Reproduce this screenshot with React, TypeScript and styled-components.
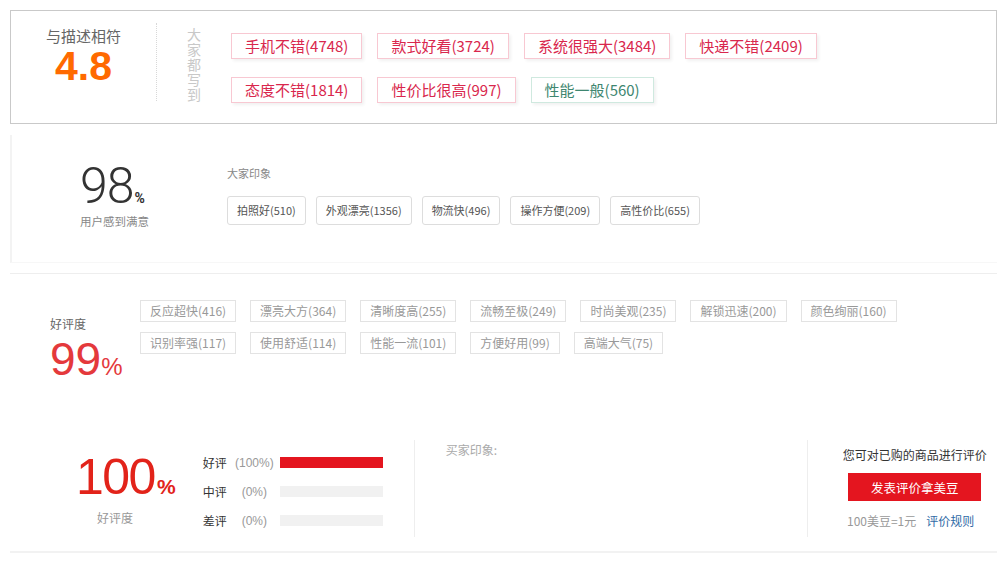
import React from 'react';
import styled, { createGlobalStyle } from 'styled-components';

const GlobalStyle = createGlobalStyle`
  body {
    margin: 0;
    background: #fff;
    font-family: "Noto Sans CJK SC", "Noto Sans", sans-serif;
    color: #333;
  }
`;

const Page = styled.div`
  width: 987px;
  padding: 10px 11px 0 10px;
`;

/* ---------- section 1: 大家都写到 ---------- */
const SummaryBox = styled.div`
  display: flex;
  align-items: flex-start;
  height: 112px;
  border: 1px solid #c9c9c9;
`;

const ScoreCol = styled.div`
  width: 145px;
  padding-top: 16px;
  text-align: center;
`;

const ScoreTitle = styled.div`
  font-size: 15px;
  line-height: 18px;
  color: #666;
`;

const ScoreValue = styled.div`
  margin-top: 3px;
  font-family: "Liberation Sans", Arial, sans-serif;
  font-weight: bold;
  font-size: 41px;
  line-height: 36px;
  color: #ff6a00;
`;

const DottedLine = styled.div`
  width: 0;
  height: 78px;
  margin-top: 12px;
  border-left: 1px dotted #d8d8d8;
`;

const VerticalLabel = styled.div`
  width: 14px;
  margin: 16px 30px 0 30px;
  font-size: 14px;
  line-height: 15px;
  color: #c8c8c8;
`;

const WriteTags = styled.div`
  display: flex;
  flex-wrap: wrap;
  gap: 18px 15px;
  width: 600px;
  padding-top: 22px;
`;

const WriteTag = styled.span<{ $good?: boolean }>`
  display: inline-block;
  height: 26px;
  padding: 0 13px;
  box-sizing: border-box;
  border: 1px solid ${(p) => (p.$good ? '#f8c8d2' : '#cfe9df')};
  box-shadow: 2px 2px 3px rgba(0, 0, 0, 0.06);
  font-size: 15px;
  line-height: 24px;
  color: ${(p) => (p.$good ? '#d9274d' : '#3e8670')};
  white-space: nowrap;
`;

/* ---------- section 2: 用户感到满意 ---------- */
const ImpressionBox = styled.div`
  display: flex;
  height: 127px;
  margin-top: 11px;
  padding-left: 68px;
  border-left: 2px solid #f3f3f3;
  border-bottom: 1px solid #f7f7f7;
`;

const SatisfyCol = styled.div`
  width: 147px;
  padding-top: 26px;
`;

const SatisfyValue = styled.div`
  font-family: Roboto, "Liberation Sans", sans-serif;
  font-weight: 300;
  font-size: 50px;
  line-height: 50px;
  color: #333;
  letter-spacing: -1px;
`;

const SmallPercent = styled.span<{ $size: number; $gap: number; $bold?: boolean }>`
  font-size: ${(p) => p.$size}px;
  line-height: 1;
  margin-left: ${(p) => p.$gap}px;
  letter-spacing: 0;
  font-weight: ${(p) => (p.$bold ? 'bold' : 'normal')};
`;

const SatisfyCaption = styled.div`
  margin-top: 2px;
  font-size: 11.5px;
  line-height: 16px;
  color: #888;
`;

const ImpressionCol = styled.div`
  padding-top: 30px;
`;

const SmallHeading = styled.div`
  font-size: 11px;
  line-height: 16px;
  color: #888;
`;

const ImpressionTags = styled.div`
  display: flex;
  gap: 10px;
  margin-top: 15px;
`;

const ImpressionTag = styled.span`
  display: inline-block;
  height: 29px;
  padding: 0 9px;
  box-sizing: border-box;
  border: 1px solid #ddd;
  border-radius: 3px;
  font-size: 11px;
  line-height: 27px;
  color: #555;
  white-space: nowrap;
`;

/* ---------- section 3: 好评度 99% ---------- */
const PraiseBox = styled.div`
  display: flex;
  height: 140px;
  margin-top: 10px;
  padding-top: 26px;
  border-top: 1px solid #eee;
`;

const PraiseLabelCol = styled.div`
  width: 90px;
  padding-left: 40px;
`;

const PraiseLabel = styled.div`
  margin-top: 16px;
  font-size: 12px;
  line-height: 16px;
  color: #666;
`;

const PraiseValue = styled.div`
  margin-top: 4px;
  font-family: "Liberation Sans", Arial, sans-serif;
  font-size: 46px;
  line-height: 46px;
  color: #e4393c;
`;

const PraiseTags = styled.div`
  display: flex;
  flex-wrap: wrap;
  align-content: flex-start;
  gap: 10px 14px;
  width: 780px;
`;

const PraiseTag = styled.span`
  display: inline-block;
  height: 22px;
  padding: 0 9px;
  box-sizing: border-box;
  border: 1px solid #e3e3e3;
  font-size: 12px;
  line-height: 20px;
  color: #999;
  white-space: nowrap;
`;

/* ---------- section 4: 评价统计 ---------- */
const RateBox = styled.div`
  display: flex;
  height: 97px;
`;

const RateScore = styled.div`
  width: 127px;
  padding: 12px 0 0 66px;
`;

const RateValue = styled.div`
  font-family: "Liberation Sans", Arial, sans-serif;
  font-size: 50px;
  line-height: 50px;
  color: #e2231a;
  letter-spacing: -1.5px;
`;

const RateCaption = styled.div`
  margin: 8px 0 0 21px;
  font-size: 12px;
  line-height: 16px;
  color: #999;
`;

const RateRows = styled.div`
  width: 180px;
  padding-top: 8px;
`;

const RateRow = styled.div`
  display: flex;
  align-items: center;
  height: 29px;
`;

const RateName = styled.span`
  width: 26px;
  font-size: 12px;
  color: #333;
`;

const RatePct = styled.span`
  width: 51px;
  text-align: center;
  font-family: "Liberation Sans", Arial, sans-serif;
  font-size: 12px;
  color: #999;
`;

const RateBar = styled.div`
  width: 103px;
  height: 11px;
  background: #f1f1f1;
`;

const RateFill = styled.div`
  height: 100%;
  background: #e4151f;
`;

const BuyerCol = styled.div`
  width: 362px;
  margin-left: 31px;
  padding: 1px 0 0 31px;
  border-left: 1px solid #eee;
`;

const BuyerLabel = styled.div`
  font-size: 12px;
  line-height: 18px;
  color: #aaa;
`;

const ActionCol = styled.div`
  display: flex;
  flex-direction: column;
  align-items: center;
  width: 165px;
  padding: 6px 0 0 24px;
  border-left: 1px solid #eee;
`;

const ActionHint = styled.div`
  font-size: 12px;
  line-height: 18px;
  color: #333;
  white-space: nowrap;
`;

const ActionButton = styled.button`
  width: 133px;
  height: 28px;
  margin-top: 9px;
  border: 0;
  background: #e4151f;
  font-family: inherit;
  font-size: 12.5px;
  color: #fff;
  cursor: pointer;
`;

const ActionNote = styled.div`
  display: flex;
  gap: 10px;
  margin: 11px 8px 0 0;
  font-size: 12px;
  line-height: 18px;
  color: #999;
`;

const RuleLink = styled.a`
  color: #2f6aa6;
  text-decoration: none;
`;

const BottomRule = styled.div`
  margin-top: 14px;
  border-top: 2px solid #f2f2f2;
`;

const writeTags = [
  { text: '手机不错(4748)', good: true },
  { text: '款式好看(3724)', good: true },
  { text: '系统很强大(3484)', good: true },
  { text: '快递不错(2409)', good: true },
  { text: '态度不错(1814)', good: true },
  { text: '性价比很高(997)', good: true },
  { text: '性能一般(560)', good: false },
];

const impressionTags = ['拍照好(510)', '外观漂亮(1356)', '物流快(496)', '操作方便(209)', '高性价比(655)'];

const praiseTags = [
  '反应超快(416)',
  '漂亮大方(364)',
  '清晰度高(255)',
  '流畅至极(249)',
  '时尚美观(235)',
  '解锁迅速(200)',
  '颜色绚丽(160)',
  '识别率强(117)',
  '使用舒适(114)',
  '性能一流(101)',
  '方便好用(99)',
  '高端大气(75)',
];

const rates = [
  { name: '好评', pct: 100 },
  { name: '中评', pct: 0 },
  { name: '差评', pct: 0 },
];

const App = () => {
  return (
    <>
      <GlobalStyle />
      <Page>
        <SummaryBox>
          <ScoreCol>
            <ScoreTitle>与描述相符</ScoreTitle>
            <ScoreValue>4.8</ScoreValue>
          </ScoreCol>
          <DottedLine />
          <VerticalLabel>大家都写到</VerticalLabel>
          <WriteTags>
            {writeTags.map((t) => (
              <WriteTag key={t.text} $good={t.good}>
                {t.text}
              </WriteTag>
            ))}
          </WriteTags>
        </SummaryBox>

        <ImpressionBox>
          <SatisfyCol>
            <SatisfyValue>
              98
              <SmallPercent $size={14} $gap={1} $bold>
                %
              </SmallPercent>
            </SatisfyValue>
            <SatisfyCaption>用户感到满意</SatisfyCaption>
          </SatisfyCol>
          <ImpressionCol>
            <SmallHeading>大家印象</SmallHeading>
            <ImpressionTags>
              {impressionTags.map((t) => (
                <ImpressionTag key={t}>{t}</ImpressionTag>
              ))}
            </ImpressionTags>
          </ImpressionCol>
        </ImpressionBox>

        <PraiseBox>
          <PraiseLabelCol>
            <PraiseLabel>好评度</PraiseLabel>
            <PraiseValue>
              99
              <SmallPercent $size={24} $gap={0}>
                %
              </SmallPercent>
            </PraiseValue>
          </PraiseLabelCol>
          <PraiseTags>
            {praiseTags.map((t) => (
              <PraiseTag key={t}>{t}</PraiseTag>
            ))}
          </PraiseTags>
        </PraiseBox>

        <RateBox>
          <RateScore>
            <RateValue>
              100
              <SmallPercent $size={21} $gap={2} $bold>
                %
              </SmallPercent>
            </RateValue>
            <RateCaption>好评度</RateCaption>
          </RateScore>
          <RateRows>
            {rates.map((r) => (
              <RateRow key={r.name}>
                <RateName>{r.name}</RateName>
                <RatePct>({r.pct}%)</RatePct>
                <RateBar>
                  <RateFill style={{ width: `${r.pct}%` }} />
                </RateBar>
              </RateRow>
            ))}
          </RateRows>
          <BuyerCol>
            <BuyerLabel>买家印象:</BuyerLabel>
          </BuyerCol>
          <ActionCol>
            <ActionHint>您可对已购的商品进行评价</ActionHint>
            <ActionButton>发表评价拿美豆</ActionButton>
            <ActionNote>
              <span>100美豆=1元</span>
              <RuleLink href="#">评价规则</RuleLink>
            </ActionNote>
          </ActionCol>
        </RateBox>
        <BottomRule />
      </Page>
    </>
  );
};

export default App;
